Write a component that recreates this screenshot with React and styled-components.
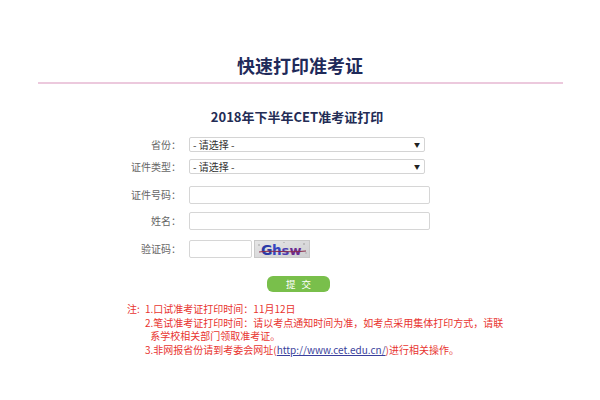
import React from "react";
import styled, { createGlobalStyle } from "styled-components";

const Global = createGlobalStyle`
  html, body { margin: 0; padding: 0; background: #ffffff; }
  body { font-family: "Noto Sans CJK SC", "Noto Sans", sans-serif; }
`;

const Page = styled.div`
  width: 600px;
  height: 400px;
  display: flex;
  flex-direction: column;
  align-items: center;
  overflow: hidden;
`;

const Title = styled.h1`
  margin: 55px 0 0;
  font-size: 18px;
  line-height: 20px;
  font-weight: 700;
  color: #1f2a5a;
`;

const Divider = styled.div`
  width: 525px;
  height: 2px;
  margin-top: 7px;
  background: #ecc9dd;
`;

const SubTitle = styled.h2`
  margin: 25px 6px 0 0;
  font-size: 13px;
  line-height: 16px;
  font-weight: 700;
  color: #232c55;
`;

const Form = styled.div`
  align-self: flex-start;
  margin-left: 110px;
  display: flex;
  flex-direction: column;
`;

const Row = styled.div`
  display: flex;
  align-items: center;
  margin-top: ${(p) => p.$gap}px;
`;

const Label = styled.div`
  width: 71px;
  margin-right: 8px;
  text-align: right;
  font-size: 10px;
  line-height: 12px;
  color: #666;
  white-space: nowrap;
`;

const SelectBox = styled.div`
  box-sizing: border-box;
  width: 236px;
  height: 15px;
  border: 1px solid #d4d4d4;
  border-radius: 2px;
  background: #fff;
  display: flex;
  align-items: center;
  justify-content: space-between;
  padding: 0 4px 0 3px;
  font-size: 10px;
  color: #333;
`;

const Arrow = styled.span`
  font-size: 6px;
  color: #222;
  line-height: 1;
`;

const Input = styled.div`
  box-sizing: border-box;
  width: ${(p) => p.$w}px;
  height: 18px;
  border: 1px solid #d6d6d6;
  border-radius: 2px;
  background: #fff;
`;

const Captcha = styled.svg`
  margin-left: 2px;
  display: block;
`;

const ButtonRow = styled.div`
  margin-top: 11px;
  margin-left: 157px;
`;

const Submit = styled.button`
  width: 63px;
  height: 16px;
  border: none;
  border-radius: 6px;
  background: #79bf4b;
  color: #fff;
  font-family: inherit;
  font-size: 9.5px;
  line-height: 16px;
  padding: 0;
  letter-spacing: 6px;
  text-indent: 6px;
`;

const Notes = styled.div`
  align-self: flex-start;
  margin: 9px 0 0 127px;
  display: flex;
  font-size: 10px;
  line-height: 13.5px;
  color: #e8342f;
`;

const NoteHead = styled.div`
  width: 18px;
  flex: none;
`;

const NoteList = styled.div`
  display: flex;
  flex-direction: column;
`;

const NoteItem = styled.div`
  white-space: nowrap;
  padding-left: ${(p) => (p.$hang ? 3 : 0)}px;
  text-indent: ${(p) => (p.$hang ? -3 : 0)}px;
`;

const Link = styled.a`
  color: #3a3f9c;
  text-decoration: underline;
`;

export default function App() {
  return (
    <>
      <Global />
      <Page>
        <Title>快速打印准考证</Title>
        <Divider />
        <SubTitle>2018年下半年CET准考证打印</SubTitle>
        <Form>
          <Row $gap={12}>
            <Label>省份：</Label>
            <SelectBox>
              <span>- 请选择 -</span>
              <Arrow>▼</Arrow>
            </SelectBox>
          </Row>
          <Row $gap={7}>
            <Label>证件类型：</Label>
            <SelectBox>
              <span>- 请选择 -</span>
              <Arrow>▼</Arrow>
            </SelectBox>
          </Row>
          <Row $gap={12}>
            <Label>证件号码：</Label>
            <Input $w={241} />
          </Row>
          <Row $gap={8}>
            <Label>姓名：</Label>
            <Input $w={241} />
          </Row>
          <Row $gap={10}>
            <Label>验证码：</Label>
            <Input $w={63} />
            <Captcha width="56" height="18" viewBox="0 0 56 18">
              <defs>
                <linearGradient id="cg" x1="0" y1="0" x2="1" y2="1">
                  <stop offset="0" stopColor="#e6e6e6" />
                  <stop offset="1" stopColor="#cfcfd2" />
                </linearGradient>
              </defs>
              <rect x="0.5" y="0.5" width="55" height="17" fill="url(#cg)" stroke="#c8c8c8" />
              <circle cx="5" cy="5" r="0.8" fill="#999" />
              <circle cx="50" cy="4" r="0.7" fill="#888" />
              <circle cx="52" cy="13" r="0.8" fill="#aaa" />
              <circle cx="30" cy="2.5" r="0.6" fill="#999" />
              <text x="7" y="14.5" fontFamily="DejaVu Sans, sans-serif" fontWeight="700" fontSize="14" fill="#2a3aa8">G</text>
              <text x="18" y="14.5" fontFamily="DejaVu Sans, sans-serif" fontWeight="700" fontSize="13.5" fill="#3545c0">h</text>
              <text x="27.5" y="14.5" fontFamily="DejaVu Sans, sans-serif" fontWeight="700" fontSize="13" fill="#4a3cb0">s</text>
              <text x="35.5" y="14.5" fontFamily="DejaVu Sans, sans-serif" fontWeight="700" fontSize="13" fill="#6a2a90">w</text>
              <path d="M5 12 C 18 10, 32 13, 52 11" stroke="#8a2a4a" strokeWidth="1" fill="none" />
            </Captcha>
          </Row>
          <ButtonRow>
            <Submit>提交</Submit>
          </ButtonRow>
        </Form>
        <Notes>
          <NoteHead>注:</NoteHead>
          <NoteList>
            <NoteItem>1.口试准考证打印时间：11月12日</NoteItem>
            <NoteItem $hang>
              2.笔试准考证打印时间：请以考点通知时间为准，如考点采用集体打印方式，请联
              <br />
              &nbsp;系学校相关部门领取准考证。
            </NoteItem>
            <NoteItem>
              3.非网报省份请到考委会网址(<Link href="#">http://www.cet.edu.cn/</Link>)进行相关操作。
            </NoteItem>
          </NoteList>
        </Notes>
      </Page>
    </>
  );
}
